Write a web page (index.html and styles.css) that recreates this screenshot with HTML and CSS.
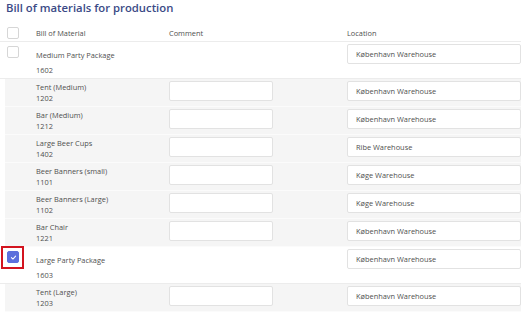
FILE: index.html
```html
<!DOCTYPE html>
<html lang="en">
<head>
    <meta charset="UTF-8">
    <meta name="viewport" content="width=device-width, initial-scale=1.0">
    <title>Bill of materials for production</title>
    <link rel="stylesheet" href="styles.css">
</head>
<body>
    <h1 class="title">Bill of materials for production</h1>

    <div class="bom">
        <div class="row head">
            <div class="cell"><span class="check"></span></div>
            <div class="cell">Bill of Material</div>
            <div class="cell">Comment</div>
            <div class="cell">Location</div>
        </div>

        <div class="row parent">
            <div class="cell"><span class="check"></span></div>
            <div class="cell name">Medium Party Package<br>1602</div>
            <div class="cell"></div>
            <div class="cell"><div class="field">København Warehouse</div></div>
        </div>

        <div class="row child">
            <div class="cell"></div>
            <div class="cell name">Tent (Medium)<br>1202</div>
            <div class="cell"><div class="field comment"></div></div>
            <div class="cell"><div class="field">København Warehouse</div></div>
        </div>
        <div class="row child">
            <div class="cell"></div>
            <div class="cell name">Bar (Medium)<br>1212</div>
            <div class="cell"><div class="field comment"></div></div>
            <div class="cell"><div class="field">København Warehouse</div></div>
        </div>
        <div class="row child">
            <div class="cell"></div>
            <div class="cell name">Large Beer Cups<br>1402</div>
            <div class="cell"><div class="field comment"></div></div>
            <div class="cell"><div class="field">Ribe Warehouse</div></div>
        </div>
        <div class="row child">
            <div class="cell"></div>
            <div class="cell name">Beer Banners (small)<br>1101</div>
            <div class="cell"><div class="field comment"></div></div>
            <div class="cell"><div class="field">Køge Warehouse</div></div>
        </div>
        <div class="row child">
            <div class="cell"></div>
            <div class="cell name">Beer Banners (Large)<br>1102</div>
            <div class="cell"><div class="field comment"></div></div>
            <div class="cell"><div class="field">Køge Warehouse</div></div>
        </div>
        <div class="row child">
            <div class="cell"></div>
            <div class="cell name">Bar Chair<br>1221</div>
            <div class="cell"><div class="field comment"></div></div>
            <div class="cell"><div class="field">København Warehouse</div></div>
        </div>

        <div class="row parent">
            <div class="cell marked">
                <span class="check on">
                    <svg viewBox="0 0 10 10" width="7" height="7"><path d="M2 5.2 L4.2 7.2 L8 3" fill="none" stroke="#fff" stroke-width="1.5" stroke-linecap="round" stroke-linejoin="round"/></svg>
                </span>
            </div>
            <div class="cell name">Large Party Package<br>1603</div>
            <div class="cell"></div>
            <div class="cell"><div class="field">København Warehouse</div></div>
        </div>

        <div class="row child">
            <div class="cell"></div>
            <div class="cell name">Tent (Large)<br>1203</div>
            <div class="cell"><div class="field comment"></div></div>
            <div class="cell"><div class="field">København Warehouse</div></div>
        </div>
    </div>
</body>
</html>
```

FILE: styles.css
```css
body {
    margin: 0;
    font-family: "Open Sans", "Noto Sans", sans-serif;
    color: #505050;
    background: #fff;
}
.title {
    margin: 0;
    padding: 0 0 0 6px;
    height: 20px;
    font-size: 11.3px;
    line-height: 15px;
    font-weight: 600;
    color: #3b4a86;
}
.bom {
    width: 521px;
    font-size: 7.4px;
}
.row {
    display: grid;
    grid-template-columns: 36px 133px 178px 174px;
    border-bottom: 1px solid #ececec;
}
.head {
    height: 21px;
    align-items: center;
}
.head .cell {
    padding-top: 4px;
}
.parent {
    height: 36px;
    align-items: start;
}
.parent .cell {
    padding-top: 2px;
}
.parent .name {
    padding-top: 6px;
    line-height: 14.5px;
}
.child {
    height: 27px;
    margin-left: 5px;
    grid-template-columns: 31px 133px 178px 174px;
    background: #f5f5f5;
    border-bottom: 1px solid #fbfbfb;
    align-items: start;
}
.child .cell {
    padding-top: 2px;
}
.child .name {
    padding-top: 3px;
    line-height: 11px;
}
.check {
    display: block;
    width: 10px;
    height: 10px;
    margin-left: 7px;
    border: 1px solid #d6d6d6;
    border-radius: 2px;
    background: #fff;
}
.parent .check {
    margin-top: 2px;
}
.check.on {
    display: flex;
    align-items: center;
    justify-content: center;
    background: #5d6fdc;
    border-color: #5d6fdc;
}
.marked {
    position: relative;
}
.marked::after {
    content: "";
    position: absolute;
    left: 1px;
    top: -1px;
    width: 19px;
    height: 19px;
    border: 2px solid #d3141f;
}
.field {
    box-sizing: border-box;
    height: 20px;
    padding: 0 8px;
    border: 1px solid #e2e2e2;
    border-radius: 2px;
    background: #fff;
    line-height: 18px;
    color: #505050;
}
.field.comment {
    width: 104px;
}
```
